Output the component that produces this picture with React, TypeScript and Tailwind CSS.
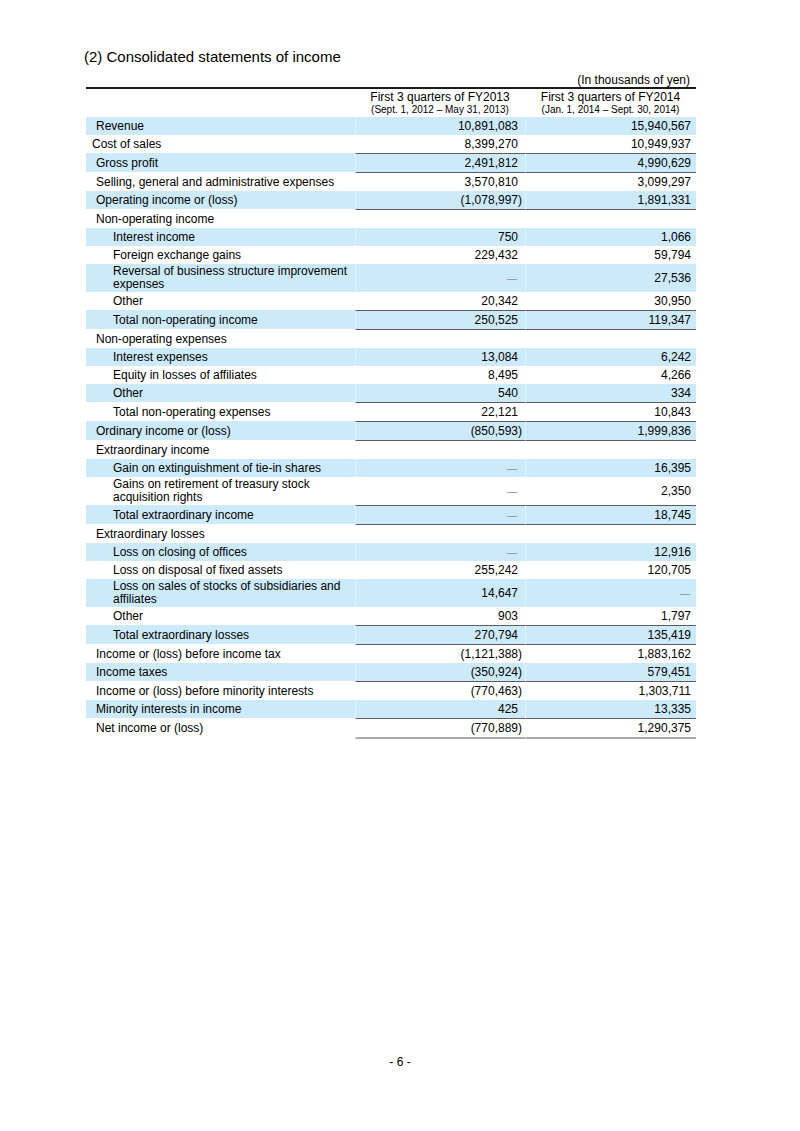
type Line = {
  label: string[]
  indent: "cost" | "one" | "two"
  a: string
  b: string
  lineAbove?: boolean
  lineBelow?: boolean
}

const rows: Line[] = [
  { label: ["Revenue"], indent: "one", a: "10,891,083", b: "15,940,567" },
  { label: ["Cost of sales"], indent: "cost", a: "8,399,270", b: "10,949,937" },
  { label: ["Gross profit"], indent: "one", a: "2,491,812", b: "4,990,629", lineAbove: true },
  { label: ["Selling, general and administrative expenses"], indent: "one", a: "3,570,810", b: "3,099,297", lineAbove: true },
  { label: ["Operating income or (loss)"], indent: "one", a: "(1,078,997)", b: "1,891,331" },
  { label: ["Non-operating income"], indent: "one", a: "", b: "", lineAbove: true },
  { label: ["Interest income"], indent: "two", a: "750", b: "1,066" },
  { label: ["Foreign exchange gains"], indent: "two", a: "229,432", b: "59,794" },
  { label: ["Reversal of business structure improvement", "expenses"], indent: "two", a: "-", b: "27,536" },
  { label: ["Other"], indent: "two", a: "20,342", b: "30,950" },
  { label: ["Total non-operating income"], indent: "two", a: "250,525", b: "119,347", lineAbove: true },
  { label: ["Non-operating expenses"], indent: "one", a: "", b: "", lineAbove: true },
  { label: ["Interest expenses"], indent: "two", a: "13,084", b: "6,242" },
  { label: ["Equity in losses of affiliates"], indent: "two", a: "8,495", b: "4,266" },
  { label: ["Other"], indent: "two", a: "540", b: "334" },
  { label: ["Total non-operating expenses"], indent: "two", a: "22,121", b: "10,843", lineAbove: true },
  { label: ["Ordinary income or (loss)"], indent: "one", a: "(850,593)", b: "1,999,836", lineAbove: true },
  { label: ["Extraordinary income"], indent: "one", a: "", b: "", lineAbove: true },
  { label: ["Gain on extinguishment of tie-in shares"], indent: "two", a: "-", b: "16,395" },
  { label: ["Gains on retirement of treasury stock", "acquisition rights"], indent: "two", a: "-", b: "2,350" },
  { label: ["Total extraordinary income"], indent: "two", a: "-", b: "18,745", lineAbove: true },
  { label: ["Extraordinary losses"], indent: "one", a: "", b: "", lineAbove: true },
  { label: ["Loss on closing of offices"], indent: "two", a: "-", b: "12,916" },
  { label: ["Loss on disposal of fixed assets"], indent: "two", a: "255,242", b: "120,705" },
  { label: ["Loss on sales of stocks of subsidiaries and", "affiliates"], indent: "two", a: "14,647", b: "-" },
  { label: ["Other"], indent: "two", a: "903", b: "1,797" },
  { label: ["Total extraordinary losses"], indent: "two", a: "270,794", b: "135,419", lineAbove: true },
  { label: ["Income or (loss) before income tax"], indent: "one", a: "(1,121,388)", b: "1,883,162", lineAbove: true },
  { label: ["Income taxes"], indent: "one", a: "(350,924)", b: "579,451" },
  { label: ["Income or (loss) before minority interests"], indent: "one", a: "(770,463)", b: "1,303,711", lineAbove: true },
  { label: ["Minority interests in income"], indent: "one", a: "425", b: "13,335" },
  { label: ["Net income or (loss)"], indent: "one", a: "(770,889)", b: "1,290,375", lineAbove: true, lineBelow: true },
]

function Amount({ value }: { value: string }) {
  if (value === "-") {
    return <span className="text-[10px] text-[#8c8c8c] mr-[1px]">—</span>
  }
  const neg = value.startsWith("(")
  return <span className={neg ? "-mr-[4px]" : ""}>{value}</span>
}

function Row({ r, i }: { r: Line; i: number }) {
  const bg = i % 2 === 0 ? "bg-[#cdeafb]" : "bg-white"
  const pad =
    r.indent === "cost" ? "pl-[6px]" : r.indent === "one" ? "pl-[10px]" : "pl-[27px]"
  // a ruled row is one pixel taller than a plain one
  const h = r.lineBelow ? "min-h-[21px]" : r.lineAbove ? "min-h-[19px]" : "min-h-[18px]"
  const topNum = r.lineAbove ? "border-t border-t-[#5c5c5c]" : ""
  const topLabel = r.lineAbove ? "border-t border-t-transparent" : ""
  const botNum = r.lineBelow ? "border-b-2 border-b-[#a9a9a9]" : ""
  const botLabel = r.lineBelow ? "border-b-2 border-b-white" : ""

  return (
    <div className={`grid grid-cols-[269px_170px_171px] ${bg}`}>
      <div className={`${topLabel} ${botLabel} ${pad} ${h} py-px flex flex-col justify-center leading-[13px]`}>
        {r.label.map((t) => (
          <span key={t}>{t}</span>
        ))}
      </div>
      <div className={`${topNum} ${botNum} ${h} border-l border-l-white/40 flex items-center justify-end pr-[7px] leading-[13px]`}>
        <Amount value={r.a} />
      </div>
      <div className={`${topNum} ${botNum} ${h} border-l border-l-white/40 flex items-center justify-end pr-[5px] leading-[13px]`}>
        <Amount value={r.b} />
      </div>
    </div>
  )
}

export default function App() {
  return (
    <div className="w-[800px] h-[1131px] bg-white text-black flex flex-col font-['Liberation_Sans',Arial,sans-serif]">
      <div className="pl-[86px] pt-[48px]">
        <h2 className="text-[15px] leading-[18px] -ml-[2px]">(2) Consolidated statements of income</h2>

        <div className="w-[610px] mt-[7px] text-[12px]">
          <div className="text-right pr-[6px] leading-[14px]">(In thousands of yen)</div>

          {/* column heads */}
          <div className="grid grid-cols-[269px_170px_171px] border-t-2 border-[#1a1a1a] h-[30px]">
            <div />
            <div className="flex flex-col items-center pt-[2px]">
              <span className="leading-[13px]">First 3 quarters of FY2013</span>
              <span className="text-[10px] leading-[12px]">(Sept. 1, 2012 – May 31, 2013)</span>
            </div>
            <div className="flex flex-col items-center pt-[2px]">
              <span className="leading-[13px]">First 3 quarters of FY2014</span>
              <span className="text-[10px] leading-[12px]">(Jan. 1, 2014 – Sept. 30, 2014)</span>
            </div>
          </div>

          {rows.map((r, i) => (
            <Row key={i} r={r} i={i} />
          ))}
        </div>
      </div>

      <div className="mt-auto pb-[62px] text-center text-[12px] leading-[14px]">- 6 -</div>
    </div>
  )
}
